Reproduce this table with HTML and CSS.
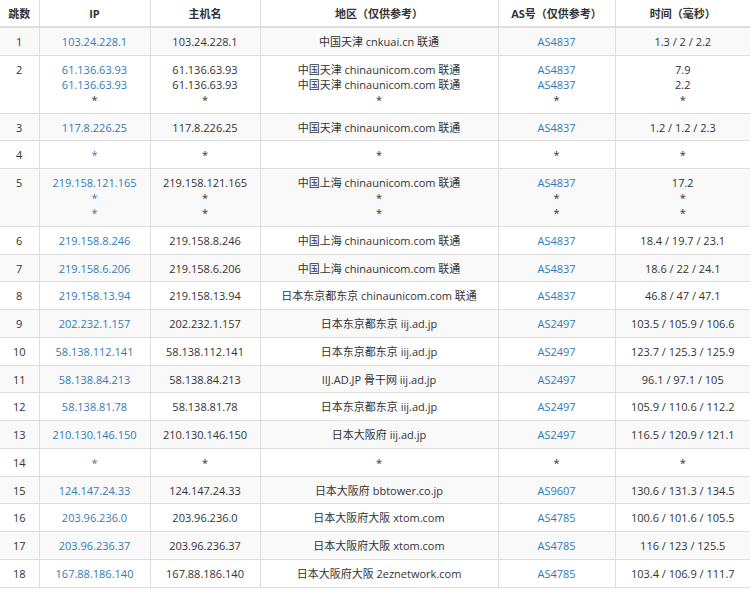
FILE: index.html
```html
<!DOCTYPE html>
<html lang="zh-CN">
<head>
<meta charset="utf-8">
<title>路由追踪</title>
<link rel="stylesheet" href="styles.css">
</head>
<body>
<table class="trace">
  <colgroup>
    <col class="c-hop"><col class="c-ip"><col class="c-host"><col class="c-geo"><col class="c-as"><col class="c-time">
  </colgroup>
  <thead>
    <tr><th>跳数</th><th>IP</th><th>主机名</th><th>地区（仅供参考）</th><th>AS号（仅供参考）</th><th>时间（毫秒）</th></tr>
  </thead>
  <tbody>
    <tr><td>1</td><td><a href="#">103.24.228.1</a></td><td>103.24.228.1</td><td>中国天津 cnkuai.cn 联通</td><td><a href="#">AS4837</a></td><td>1.3 / 2 / 2.2</td></tr>
    <tr><td>2</td><td><a href="#">61.136.63.93</a><br><a href="#">61.136.63.93</a><br>*</td><td>61.136.63.93<br>61.136.63.93<br>*</td><td>中国天津 chinaunicom.com 联通<br>中国天津 chinaunicom.com 联通<br>*</td><td><a href="#">AS4837</a><br><a href="#">AS4837</a><br>*</td><td>7.9<br>2.2<br>*</td></tr>
    <tr><td>3</td><td><a href="#">117.8.226.25</a></td><td>117.8.226.25</td><td>中国天津 chinaunicom.com 联通</td><td><a href="#">AS4837</a></td><td>1.2 / 1.2 / 2.3</td></tr>
    <tr><td>4</td><td><a href="#">*</a></td><td>*</td><td>*</td><td>*</td><td>*</td></tr>
    <tr><td>5</td><td><a href="#">219.158.121.165</a><br><a href="#">*</a><br><a href="#">*</a></td><td>219.158.121.165<br>*<br>*</td><td>中国上海 chinaunicom.com 联通<br>*<br>*</td><td><a href="#">AS4837</a><br>*<br>*</td><td>17.2<br>*<br>*</td></tr>
    <tr><td>6</td><td><a href="#">219.158.8.246</a></td><td>219.158.8.246</td><td>中国上海 chinaunicom.com 联通</td><td><a href="#">AS4837</a></td><td>18.4 / 19.7 / 23.1</td></tr>
    <tr><td>7</td><td><a href="#">219.158.6.206</a></td><td>219.158.6.206</td><td>中国上海 chinaunicom.com 联通</td><td><a href="#">AS4837</a></td><td>18.6 / 22 / 24.1</td></tr>
    <tr><td>8</td><td><a href="#">219.158.13.94</a></td><td>219.158.13.94</td><td>日本东京都东京 chinaunicom.com 联通</td><td><a href="#">AS4837</a></td><td>46.8 / 47 / 47.1</td></tr>
    <tr><td>9</td><td><a href="#">202.232.1.157</a></td><td>202.232.1.157</td><td>日本东京都东京 iij.ad.jp</td><td><a href="#">AS2497</a></td><td>103.5 / 105.9 / 106.6</td></tr>
    <tr><td>10</td><td><a href="#">58.138.112.141</a></td><td>58.138.112.141</td><td>日本东京都东京 iij.ad.jp</td><td><a href="#">AS2497</a></td><td>123.7 / 125.3 / 125.9</td></tr>
    <tr><td>11</td><td><a href="#">58.138.84.213</a></td><td>58.138.84.213</td><td>IIJ.AD.JP 骨干网 iij.ad.jp</td><td><a href="#">AS2497</a></td><td>96.1 / 97.1 / 105</td></tr>
    <tr><td>12</td><td><a href="#">58.138.81.78</a></td><td>58.138.81.78</td><td>日本东京都东京 iij.ad.jp</td><td><a href="#">AS2497</a></td><td>105.9 / 110.6 / 112.2</td></tr>
    <tr><td>13</td><td><a href="#">210.130.146.150</a></td><td>210.130.146.150</td><td>日本大阪府 iij.ad.jp</td><td><a href="#">AS2497</a></td><td>116.5 / 120.9 / 121.1</td></tr>
    <tr><td>14</td><td><a href="#">*</a></td><td>*</td><td>*</td><td>*</td><td>*</td></tr>
    <tr><td>15</td><td><a href="#">124.147.24.33</a></td><td>124.147.24.33</td><td>日本大阪府 bbtower.co.jp</td><td><a href="#">AS9607</a></td><td>130.6 / 131.3 / 134.5</td></tr>
    <tr><td>16</td><td><a href="#">203.96.236.0</a></td><td>203.96.236.0</td><td>日本大阪府大阪 xtom.com</td><td><a href="#">AS4785</a></td><td>100.6 / 101.6 / 105.5</td></tr>
    <tr><td>17</td><td><a href="#">203.96.236.37</a></td><td>203.96.236.37</td><td>日本大阪府大阪 xtom.com</td><td><a href="#">AS4785</a></td><td>116 / 123 / 125.5</td></tr>
    <tr><td>18</td><td><a href="#">167.88.186.140</a></td><td>167.88.186.140</td><td>日本大阪府大阪 2eznetwork.com</td><td><a href="#">AS4785</a></td><td>103.4 / 106.9 / 111.7</td></tr>
  </tbody>
</table>
</body>
</html>
```

FILE: styles.css
```css
html, body {
  margin: 0;
  padding: 0;
  background: #fff;
}

body {
  font-family: "Open Sans", "Noto Sans CJK SC", sans-serif;
  font-size: 11px;
  color: #333;
}

.trace {
  width: 750px;
  border-collapse: collapse;
  table-layout: fixed;
}

.c-hop { width: 39px; }
.c-ip { width: 111px; }
.c-host { width: 110px; }
.c-geo { width: 238px; }
.c-as { width: 117px; }
.c-time { width: 135px; }

.trace th,
.trace td {
  text-align: center;
  vertical-align: top;
  line-height: 15px;
  border-left: 1px solid #ddd;
  white-space: nowrap;
  overflow: hidden;
}

.trace th:first-child,
.trace td:first-child {
  border-left: none;
}

.trace th {
  font-weight: bold;
  padding: 5.5px 4px 5.5px;
  border-bottom: 2px solid #ddd;
}

.trace td {
  padding: 6px 4px 5.75px;
  border-bottom: 1px solid #ddd;
}

.trace tbody tr:nth-child(odd) {
  background: #f9f9f9;
}

.trace a {
  color: #337ab7;
  text-decoration: none;
}
```
